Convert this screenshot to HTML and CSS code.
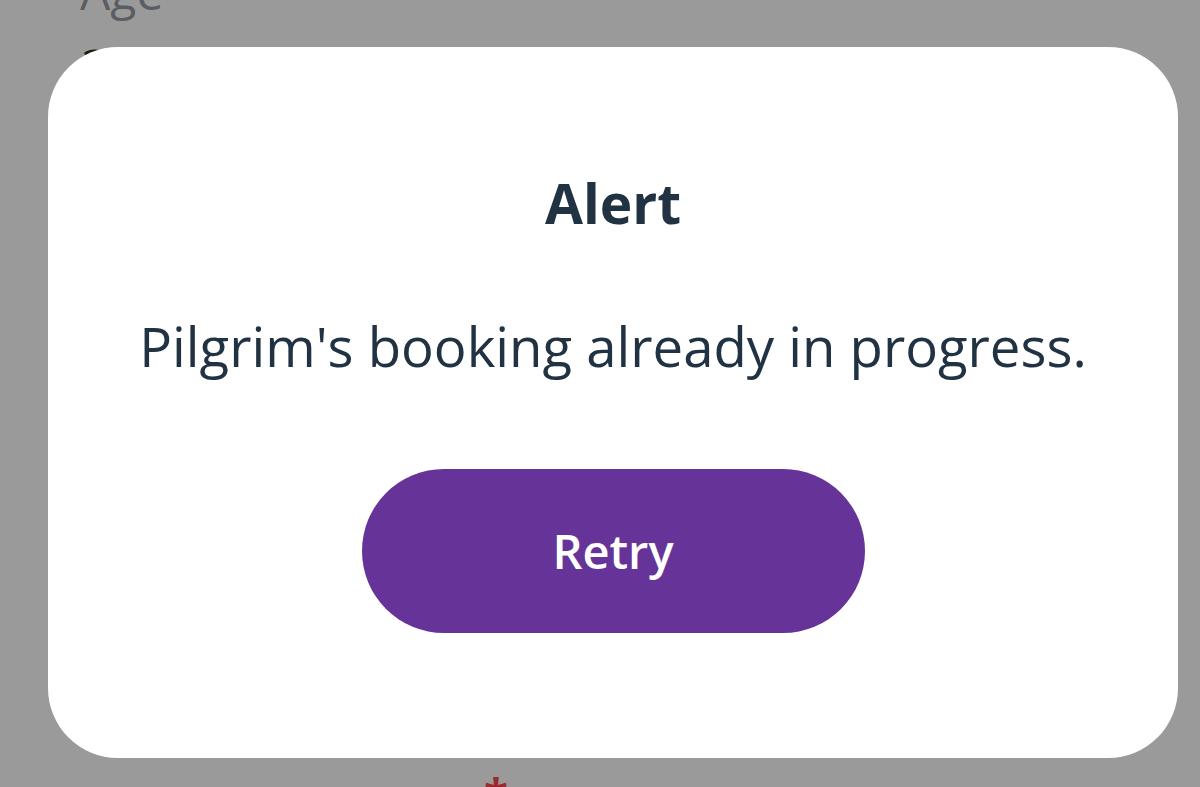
FILE: index.html
```html
<!DOCTYPE html>
<html>
<head>
<meta charset="utf-8">
<link rel="stylesheet" href="styles.css">
</head>
<body>
<div class="page">
  <div class="field-label">Age</div>
  <div class="field-value">3</div>
  <div class="required">*</div>
</div>
<div class="overlay">
  <div class="modal">
    <h1 class="modal-title">Alert</h1>
    <p class="modal-message">Pilgrim's booking already in progress.</p>
    <button class="modal-button">Retry</button>
  </div>
</div>
</body>
</html>
```
FILE: styles.css
```css
html, body {
  margin: 0;
  padding: 0;
}
body {
  width: 1200px;
  height: 787px;
  overflow: hidden;
  background: #9a9a9a;
  font-family: "Open Sans", "Liberation Sans", sans-serif;
  position: relative;
}
.page {
  position: relative;
  height: 787px;
}
.field-label {
  position: absolute;
  left: 80px;
  top: -41px;
  font-size: 48px;
  color: #5a5d61;
}
.field-value {
  position: absolute;
  left: 82px;
  top: 34px;
  font-size: 48px;
  font-weight: 700;
  color: #1a1a1a;
}
.required {
  position: absolute;
  left: 484px;
  top: 772px;
  font-size: 44px;
  font-weight: 700;
  color: #972a2f;
  line-height: 1;
}
.overlay {
  position: absolute;
  inset: 0;
}
.modal {
  position: absolute;
  left: 48px;
  top: 47px;
  width: 1130px;
  height: 711px;
  background: #fff;
  border-radius: 70px;
  display: flex;
  flex-direction: column;
  align-items: center;
  box-sizing: border-box;
  padding-top: 121px;
}
.modal-title {
  margin: 0;
  font-size: 55px;
  font-weight: 700;
  line-height: 70px;
  color: #213243;
}
.modal-message {
  margin: 73px 0 0;
  font-size: 54.5px;
  font-weight: 400;
  line-height: 70px;
  color: #213243;
  white-space: nowrap;
}
.modal-button {
  margin-top: 88px;
  width: 503px;
  height: 164px;
  border: none;
  border-radius: 82px;
  background: #663399;
  color: #fff;
  font-family: "Open Sans", "Liberation Sans", sans-serif;
  font-size: 47px;
  font-weight: 600;
}
```
